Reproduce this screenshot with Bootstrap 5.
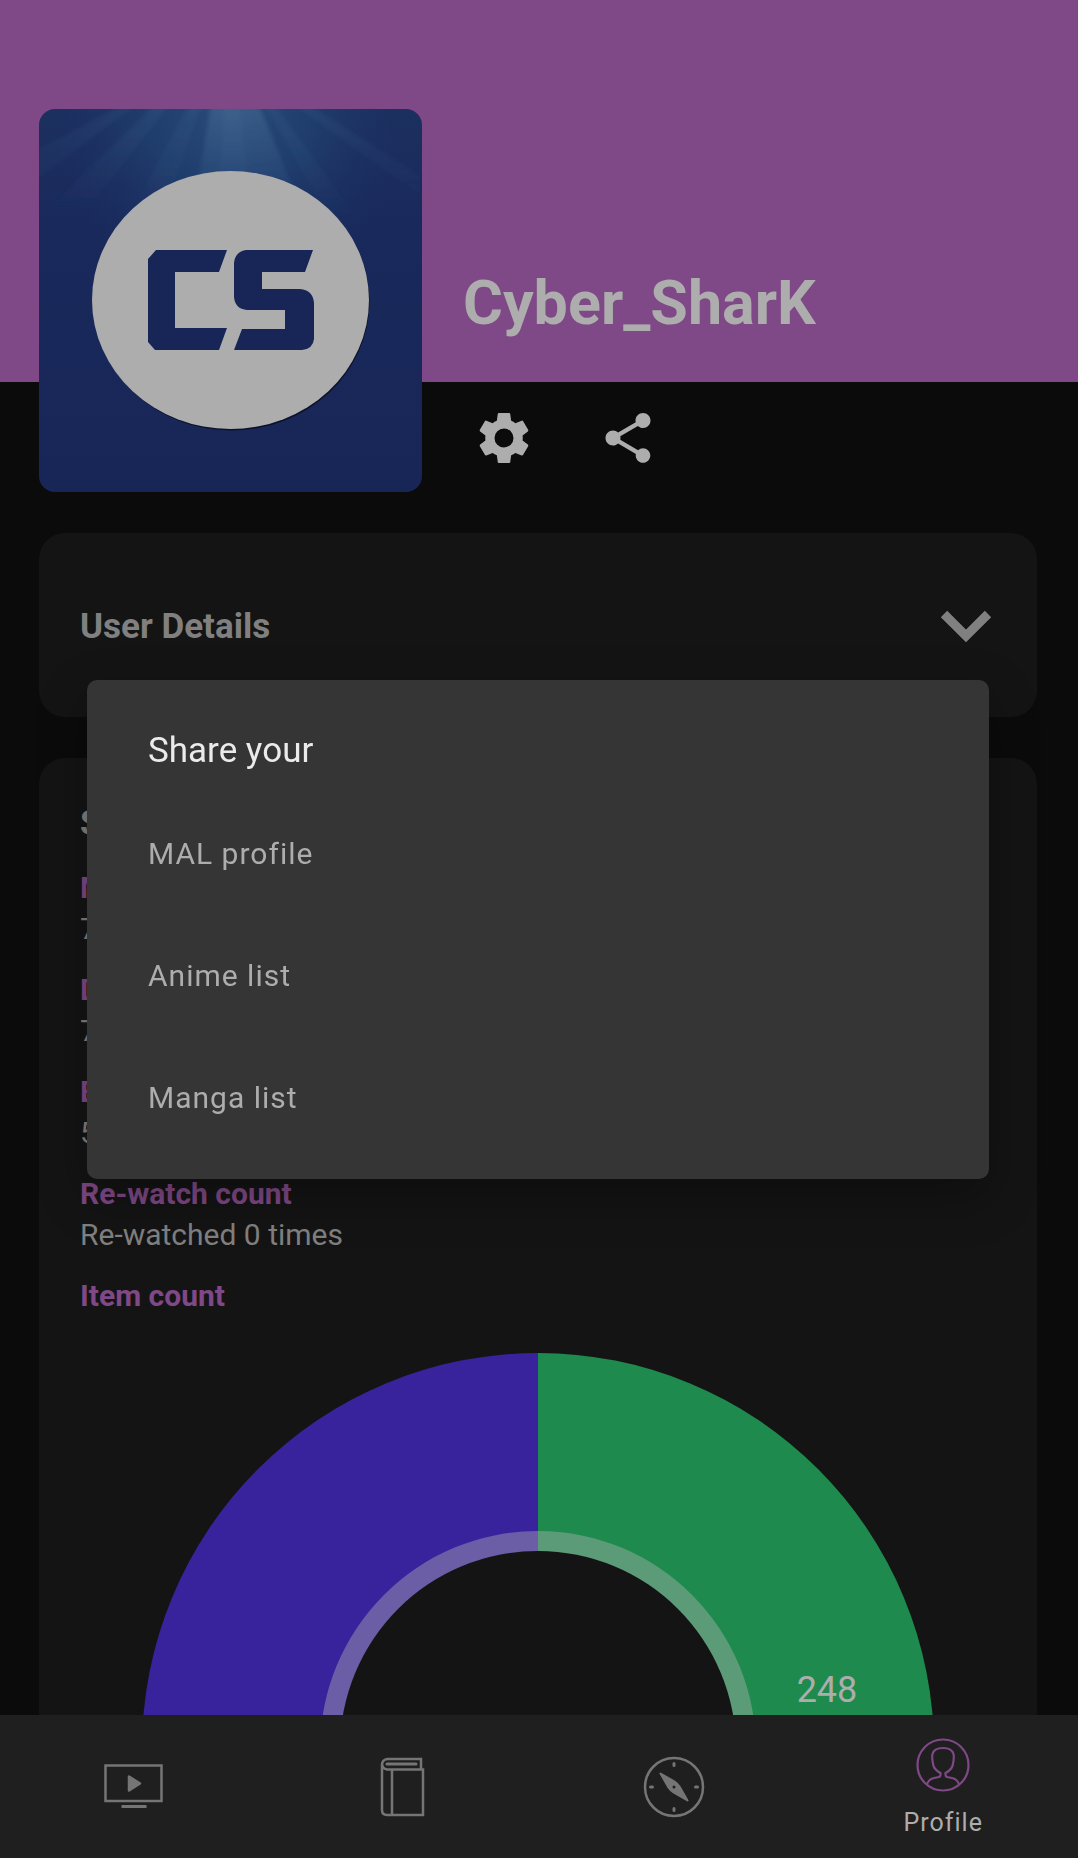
<!DOCTYPE html>
<html lang="en">
<head>
<meta charset="utf-8">
<meta name="viewport" content="width=device-width, initial-scale=1">
<title>Profile</title>
<link href="https://cdn.jsdelivr.net/npm/bootstrap@5.3.0/dist/css/bootstrap.min.css" rel="stylesheet">
<style>
  body { background: #0b0b0b; color: #808080; font-family: Roboto, "Noto Sans", sans-serif; font-size: 30px; line-height: 41px; }
  .hero { background: linear-gradient(#7f4886, #7f4886) 0 0 / 100% 382px no-repeat; padding: 109px 41px 41px 39px; gap: 41px; }
  .avatar { width: 383px; height: 383px; border-radius: 16px; }
  .user-name { font-size: 61px; line-height: 80px; color: #adadad; padding-top: 154px; }
  .hero-actions { gap: 64px; padding: 65px 0 0 11px; }
  .icon-btn { color: #adadad; line-height: 1; }
  .icon-btn svg { width: 60px; height: 60px; display: block; }
  .sections { padding: 0 41px 0 39px; gap: 41px; }
  .panel { background: #141414; border-radius: 26px; padding: 41px; }
  .panel-toggle { color: #808080; padding: 32px 0 28px; }
  .panel-title { font-size: 35px; line-height: 42px; }
  .stats-title { padding-top: 4px; margin-bottom: 22px; }
  .chevron { width: 60px; height: 42px; }
  .stats dt { color: #7f4886; }
  .stats dd { margin-bottom: 20px; }
  .donut-row { padding-top: 37px; }
  .donut { width: 792px; }
  .tab-bar { background: #1f1f1f; height: 143px; z-index: 2; }
  .tab-link { color: #757575; font-size: 25px; line-height: 34px; }
  .tab-link svg { width: 62px; height: 62px; }
  .tab-link.current { color: #adadad; padding-top: 4px; }
  .tab-link.current svg { color: #7f4886; width: 56px; height: 56px; margin-bottom: 13px; }
  .share-dialog { margin: 0 89px 0 87px; max-width: none; }
  .share-box { background: #353535; border-radius: 10px; padding: 50px 61px 20px; box-shadow: 0 18px 50px rgba(0,0,0,.3); }
  .share-title { color: #ebebeb; font-size: 35px; line-height: 42px; margin-bottom: 21px; }
  .share-item { color: #adadad; font-size: 30px; line-height: 42px; padding: 40px 0; }
  .share-item, .tab-link { letter-spacing: 1px; }
</style>
</head>
<body>
<div class="vh-100 d-flex flex-column overflow-hidden">
  <main class="flex-grow-1 overflow-hidden">
    <header class="hero d-flex">
      <svg class="avatar flex-shrink-0" viewBox="0 0 383 383" role="img" aria-label="Avatar">
        <defs>
          <linearGradient id="sea" x1="0" y1="0" x2="0" y2="1">
            <stop offset="0" stop-color="#1c305f"/><stop offset=".3" stop-color="#19295b"/><stop offset="1" stop-color="#182657"/>
          </linearGradient>
          <radialGradient id="glow" gradientUnits="userSpaceOnUse" cx="191" cy="0" r="190">
            <stop offset="0" stop-color="#2a4d7c"/><stop offset=".45" stop-color="#203f6e" stop-opacity=".85"/><stop offset="1" stop-color="#1a2c60" stop-opacity="0"/>
          </radialGradient>
          <linearGradient id="ray" gradientUnits="userSpaceOnUse" x1="0" y1="0" x2="0" y2="120">
            <stop offset="0" stop-color="#486c94" stop-opacity=".5"/><stop offset="1" stop-color="#34598a" stop-opacity="0"/>
          </linearGradient>
          <filter id="soft"><feGaussianBlur stdDeviation="2"/></filter>
        </defs>
        <rect width="383" height="383" fill="url(#sea)"/>
        <rect width="383" height="200" fill="url(#glow)"/>
        <g fill="url(#ray)" filter="url(#soft)">
          <path d="M172-4h48l34 84h-96z"/>
          <path d="M186-4h14l10 84h-30z" opacity=".5"/>
          <path d="M150-4h12l-38 110h-34z" opacity=".35"/>
          <path d="M116-4h14l-78 100h-40z" opacity=".35"/>
          <path d="M226-4h10l80 110h-28z" opacity=".35"/>
          <path d="M256-4h14l110 70v20z" opacity=".3"/>
          <path d="M84-4h12l-100 76v-30z" opacity=".3"/>
        </g>
        <ellipse cx="192.500" cy="192.500" rx="138" ry="129" fill="#0b1229"/>
        <ellipse cx="191.500" cy="191" rx="138.500" ry="129" fill="#adadad"/>
        <g fill="#182657">
          <path d="M118 141h70l-8 22h-44v56h52l-8 22h-64l-7-8v-83l8-9z"/>
          <path d="M207 141h67l-8 22h-43v17h38q13 1 14 14v36q-1 10-12 11h-68l8-21h43v-19h-38q-12-1-13-13v-34q1-11 12-13z"/>
        </g>
      </svg>
      <div>
        <h1 class="user-name fw-bold mb-0">Cyber_SharK</h1>
        <div class="hero-actions d-flex">
          <button type="button" class="icon-btn btn p-0 border-0" aria-label="Settings">
            <svg viewBox="0 0 24 24" fill="currentColor"><path d="M19.430 12.980c.04-.32.07-.64.07-.98s-.03-.66-.07-.98l2.110-1.650c.19-.15.24-.42.12-.64l-2-3.460c-.12-.22-.39-.3-.61-.22l-2.490 1c-.52-.4-1.080-.73-1.690-.98l-.38-2.650C14.460 2.180 14.250 2 14 2h-4c-.25 0-.46.18-.49.42l-.38 2.650c-.61.25-1.170.59-1.690.98l-2.490-1c-.23-.09-.49 0-.61.22l-2 3.460c-.13.22-.07.49.12.64l2.110 1.650c-.04.32-.07.65-.07.98s.03.66.07.98l-2.110 1.650c-.19.15-.24.42-.12.64l2 3.460c.12.22.39.3.61.22l2.490-1c.52.4 1.080.73 1.690.98l.38 2.650c.03.24.24.42.49.42h4c.25 0 .46-.18.49-.42l.38-2.650c.61-.25 1.170-.59 1.690-.98l2.490 1c.23.09.49 0 .61-.22l2-3.460c.12-.22.07-.49-.12-.64zM12 15.800a3.800 3.800 0 1 1 0-7.600 3.800 3.800 0 0 1 0 7.600z"/></svg>
          </button>
          <button type="button" class="icon-btn btn p-0 border-0" aria-label="Share">
            <svg viewBox="0 0 24 24" fill="currentColor"><path d="M18 16.080c-.76 0-1.440.3-1.960.77L8.910 12.700c.05-.23.09-.46.09-.7s-.04-.47-.09-.7l7.050-4.110c.54.5 1.250.81 2.040.81 1.660 0 3-1.340 3-3s-1.340-3-3-3-3 1.340-3 3c0 .24.04.47.09.7L8.040 9.810C7.500 9.310 6.790 9 6 9c-1.660 0-3 1.340-3 3s1.340 3 3 3c.79 0 1.500-.31 2.040-.81l7.120 4.160c-.05.21-.08.43-.08.65 0 1.610 1.310 2.920 2.920 2.920s2.920-1.310 2.920-2.920-1.310-2.920-2.920-2.920z"/></svg>
          </button>
        </div>
      </div>
    </header>
    <div class="sections d-flex flex-column">
      <section class="panel">
        <button type="button" class="panel-toggle btn border-0 w-100 d-flex align-items-center justify-content-between">
          <span class="panel-title fw-bold">User Details</span>
          <svg class="chevron" viewBox="0 0 60 42" fill="none" stroke="currentColor" stroke-width="9"><path d="M8 8l22 22 22-22"/></svg>
        </button>
      </section>
      <section class="panel">
        <h2 class="panel-title stats-title fw-bold">Statistics</h2>
        <dl class="stats mb-0">
          <dt>Mean score</dt><dd>7</dd>
          <dt>Days</dt><dd>7</dd>
          <dt>Episodes</dt><dd>5</dd>
          <dt>Re-watch count</dt><dd>Re-watched 0 times</dd>
          <dt>Item count</dt>
          <dd class="donut-row d-flex justify-content-center">
            <svg class="donut" viewBox="0 0 792 792" role="img" aria-label="Item count chart">
              <path fill="#1f8a4d" d="M396 0a396 396 0 0 1 0 792z"/>
              <path fill="#39239d" d="M396 0a396 396 0 0 0 0 792z"/>
              <path fill="#5c9b77" d="M396 178a218 218 0 0 1 0 436z"/>
              <path fill="#6c5da7" d="M396 178a218 218 0 0 0 0 436z"/>
              <circle cx="396" cy="396" r="198" fill="#141414"/>
              <text x="685" y="349" font-size="36" fill="#adadad" text-anchor="middle">248</text>
            </svg>
          </dd>
        </dl>
      </section>
    </div>
  </main>
  <nav class="tab-bar flex-shrink-0">
    <div class="row g-0 h-100 text-center">
      <a href="#" class="tab-link col d-flex flex-column align-items-center justify-content-center text-decoration-none" aria-label="Anime">
        <svg viewBox="0 0 62 62" fill="none" stroke="currentColor" stroke-width="2.500"><path d="M.5 9.500h56v35.500h-56z" transform="translate(1)"/><path d="M17.500 50.500h25" stroke-width="3"/><path d="M25 20.500v14l11-7z" fill="currentColor" stroke-linejoin="round"/></svg>
      </a>
      <a href="#" class="tab-link col d-flex flex-column align-items-center justify-content-center text-decoration-none" aria-label="Manga">
        <svg viewBox="0 0 62 62" fill="none" stroke="currentColor" stroke-width="2.500"><path d="M48 13V3H14q-5 1-5 6v45q0 5 5 5h36V13.500H14q-5-1-5-6M19 13.500V59"/><path d="M14 8h29" stroke-width="3" stroke-linecap="round"/></svg>
      </a>
      <a href="#" class="tab-link col d-flex flex-column align-items-center justify-content-center text-decoration-none" aria-label="Explore">
        <svg viewBox="0 0 62 62" fill="none" stroke="currentColor" stroke-width="2.500"><circle cx="31" cy="31" r="29"/><path d="M31 7.500v2M31 52.500v2M7.500 31h2M52.500 31h2" stroke-width="3" stroke-linecap="round"/><path fill="currentColor" stroke-width="2" stroke-linejoin="round" d="M17.500 17.500l14 8q3 2 5 5l8 14-14-8q-3-2-5-5z"/><circle cx="31" cy="31" r="1.500" fill="#1f1f1f" stroke="none"/></svg>
      </a>
      <a href="#" class="tab-link current col d-flex flex-column align-items-center justify-content-center text-decoration-none" aria-current="page">
        <svg viewBox="0 0 56 56" fill="none" stroke="currentColor" stroke-width="2.200"><circle cx="28" cy="28" r="25.500"/><path d="M12 47q2-5 7-6l5-1q2-1 1.500-4Q20 33 18.500 29q-2-8-1-12Q19 11 28 11t10.500 6q1 4-1 12-1.500 4-7 7-.5 3 1.500 4l5 1q5 1 7 6"/></svg>
        Profile
      </a>
    </div>
  </nav>
</div>

<div class="modal d-block" tabindex="-1" role="dialog" aria-labelledby="shareTitle">
  <div class="modal-dialog modal-dialog-centered share-dialog min-vh-100">
    <div class="share-box modal-content border-0">
      <h2 class="share-title fw-normal" id="shareTitle">Share your</h2>
      <button type="button" class="share-item btn border-0 text-start">MAL profile</button>
      <button type="button" class="share-item btn border-0 text-start">Anime list</button>
      <button type="button" class="share-item btn border-0 text-start">Manga list</button>
    </div>
  </div>
</div>
<script src="https://cdn.jsdelivr.net/npm/bootstrap@5.3.0/dist/js/bootstrap.bundle.min.js"></script>
</body>
</html>
